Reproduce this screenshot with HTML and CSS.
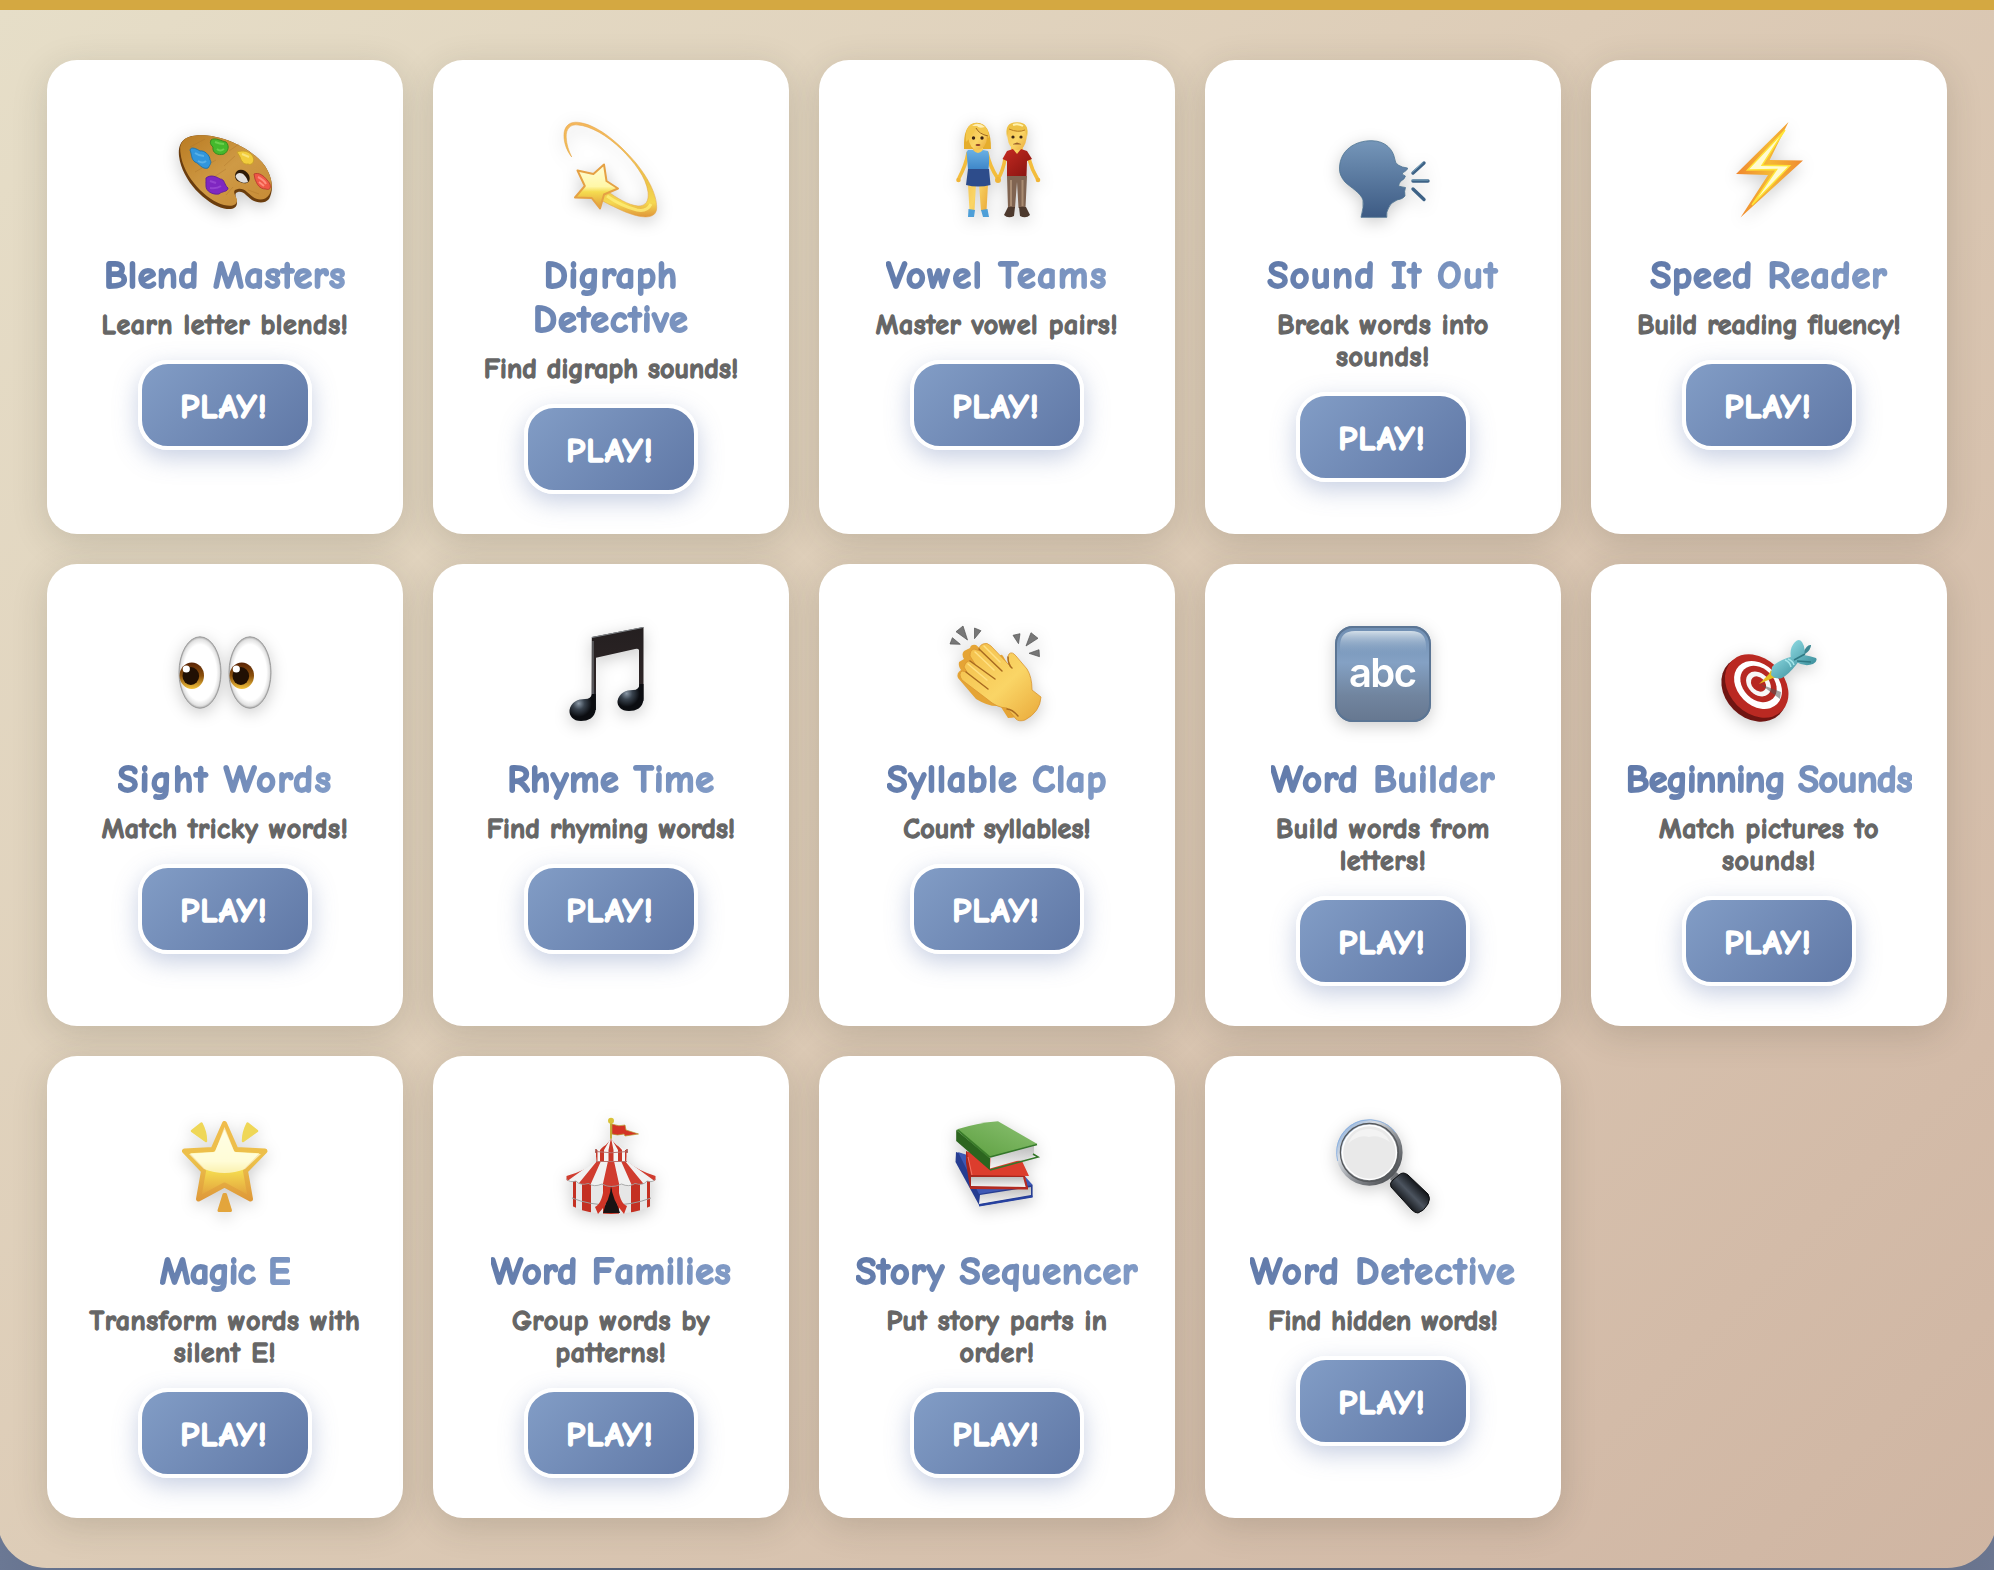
FILE: index.html
```html
<!DOCTYPE html>
<html lang="en">
<head>
<meta charset="utf-8">
<title>Reading Games</title>
<link rel="stylesheet" href="styles.css">
</head>
<body>
<svg class="defs" width="0" height="0" aria-hidden="true">
  <defs>
    <linearGradient id="wood" x1="0" y1="0" x2="1" y2="1"><stop offset="0" stop-color="#b97b22"/><stop offset=".5" stop-color="#cf9a45"/><stop offset="1" stop-color="#c68a35"/></linearGradient>
    <linearGradient id="gold" x1="0" y1="0" x2="0" y2="1"><stop offset="0" stop-color="#f5b75c"/><stop offset=".65" stop-color="#ecc648"/><stop offset=".85" stop-color="#f5d850"/><stop offset="1" stop-color="#e0963a"/></linearGradient>
    <linearGradient id="star" x1="0" y1="0" x2="0" y2="1"><stop offset="0" stop-color="#fffdd8"/><stop offset=".5" stop-color="#fff7a8"/><stop offset=".62" stop-color="#f5dc50"/><stop offset="1" stop-color="#e09a3a"/></linearGradient>
    <linearGradient id="starEdge" x1="0" y1="0" x2="0" y2="1"><stop offset="0" stop-color="#f0bc4c"/><stop offset=".5" stop-color="#ecc04a"/><stop offset="1" stop-color="#df9a3a"/></linearGradient>
    <linearGradient id="head" x1="0" y1="0" x2="0" y2="1"><stop offset="0" stop-color="#7596b9"/><stop offset="1" stop-color="#3d5b84"/></linearGradient>
    <linearGradient id="bolt" x1="0" y1="0" x2="1" y2="0"><stop offset="0" stop-color="#f0862e"/><stop offset=".5" stop-color="#f5b736"/><stop offset="1" stop-color="#ef8a30"/></linearGradient>
    <linearGradient id="skin" x1="0" y1="0" x2="1" y2="1"><stop offset="0" stop-color="#f3bd48"/><stop offset=".55" stop-color="#fad566"/><stop offset="1" stop-color="#e9a93a"/></linearGradient>
    <linearGradient id="iris" x1="0" y1="0" x2="0" y2="1"><stop offset="0" stop-color="#5a2506"/><stop offset=".5" stop-color="#8a4f0c"/><stop offset="1" stop-color="#f2c23c"/></linearGradient>
    <radialGradient id="eyeball"><stop offset=".78" stop-color="#fff"/><stop offset=".93" stop-color="#e2e2e2"/><stop offset="1" stop-color="#a9a9a9"/></radialGradient>
    <radialGradient id="note" cx=".35" cy=".35"><stop offset="0" stop-color="#8a98a6"/><stop offset=".45" stop-color="#39434e"/><stop offset="1" stop-color="#0b0d11"/></radialGradient>
    <linearGradient id="beam" x1="0" y1="0" x2="0" y2="1"><stop offset="0" stop-color="#241f20"/><stop offset=".7" stop-color="#2d2526"/><stop offset="1" stop-color="#202c3b"/></linearGradient>
    <linearGradient id="tile" x1="0" y1="0" x2="0" y2="1"><stop offset="0" stop-color="#6f8eb2"/><stop offset=".38" stop-color="#84a1c4"/><stop offset=".72" stop-color="#71859f"/><stop offset="1" stop-color="#667790"/></linearGradient>
    <linearGradient id="gloss" x1="0" y1="0" x2="0" y2="1"><stop offset="0" stop-color="#d3dfe9"/><stop offset="1" stop-color="#84a1c4" stop-opacity="0"/></linearGradient>
    <linearGradient id="tee" x1="0" y1="0" x2="0" y2="1"><stop offset="0" stop-color="#6ab0e4"/><stop offset="1" stop-color="#3f87c9"/></linearGradient>
    <linearGradient id="polo" x1="0" y1="0" x2="1" y2="1"><stop offset="0" stop-color="#c52a22"/><stop offset="1" stop-color="#85130f"/></linearGradient>
    <linearGradient id="green" x1="0" y1="1" x2="1" y2="0"><stop offset="0" stop-color="#5b9e3e"/><stop offset="1" stop-color="#8bc172"/></linearGradient>
    <linearGradient id="ring" x1="0" y1="0" x2="1" y2="1"><stop offset="0" stop-color="#7fa8dc"/><stop offset=".3" stop-color="#d8dde3"/><stop offset=".6" stop-color="#8a8d92"/><stop offset="1" stop-color="#3c3f43"/></linearGradient>
    <linearGradient id="grip" x1="0" y1="1" x2="1" y2="0"><stop offset=".25" stop-color="#08090b"/><stop offset=".5" stop-color="#4c545f"/><stop offset=".72" stop-color="#101317"/></linearGradient>
    <linearGradient id="dart" x1="0" y1="0" x2="1" y2="1"><stop offset="0" stop-color="#8fdbe3"/><stop offset="1" stop-color="#3a8d9a"/></linearGradient>
    <linearGradient id="pages" x1="0" y1="0" x2="0" y2="1"><stop offset="0" stop-color="#bdbdbd"/><stop offset="1" stop-color="#f4f4f4"/></linearGradient>
    <clipPath id="roof"><path d="M33 43.500H64Q76 53 92.500 58V62Q90 65 84 63Q80 68 72 65.500Q66 69.500 58.500 66Q48 71 39 66Q31 69.500 25.500 65.500Q17 68 13 63Q6 65 3.500 62V58Q22 53 33 43.500Z"/></clipPath>
    <clipPath id="wall"><path d="M9 61H88V88Q72 96 48 96Q24 96 9 88Z"/></clipPath>
    <clipPath id="cone"><path d="M48 20Q50 27 64.500 32.500L63.500 43.700H33.500L32.500 32.500Q46 27 48 20Z"/></clipPath>
  </defs>
</svg>

<main class="games">
  <article class="card">
    <svg class="icon" viewBox="0 0 96 96">
      <path fill="#6b3d0d" d="M2 34C0 15 14 12 30 13.500C54 16 78 30 88 44C97 58 96 70 92 77C88 82 80 81 75 78C69 74 67 69 61 70C56 71 60 77 60 80.500C60 87 54 88 47 86.500C29 82 5 59 2 34Z"/>
      <path fill="url(#wood)" d="M3.500 31C1 15 15 12 30 13.500C54 16 78 30 88 44C96 57 96 66 92 73C88 79 80 78 76 75C70 71 68 66 61 67C53 68 60 75 60 78C60 84 54 84.500 47 83C30 79 6 55 3.500 31Z"/>
      <path stroke="#a97128" stroke-width=".6" opacity=".6" d="M13 25L28 17M18 50L39 38M28 61L49 47M52 29L62 22M49 73L56 65M47 44L58 34M71 68L82 72"/>
      <path fill="#2f1b07" d="M58 53C59 46 68 46 72 53C75 61 68 63 63 60C59 59 58 56 58 53Z"/><path d="M58.500 54C61 48 69 51 71 60C67 62 60 60 58.500 54Z" fill="#e2e0de"/>
      <path fill="#3196dc" stroke="#2774a2" d="M13 28C14 24 20 27 23 29C27 28 33 33 33 38C35 40 33 43 31 46C25 48 22 41 18 40C14 37 15 33 13 28Z"/><path fill="none" stroke="#58b0e6" stroke-width="2" d="M18 31Q22 34 27 34M21 39Q26 42 29 39"/>
      <path fill="#45b82c" stroke="#398a20" d="M34 18C38 15 44 19 49 20C53 24 51 30 47 32C41 34 35 31 36 25C33 22 33 21 34 18Z"/><path fill="none" stroke="#6bd04c" stroke-width="2" d="M38 20Q43 22 47 22M40 27Q43 30 47 27"/>
      <path fill="#f2cd3c" stroke="#caa02b" d="M60 30C66 28 71 29 75 33C79 39 75 44 71 42C66 43 64 38 63 35Z"/><path stroke="#fae37a" fill="none" stroke-width="2" d="M65 32L72 35"/>
      <path fill="#ef5746" stroke="#bd4031" d="M77 52C82 50 87 54 90 58C96 64 93 69 89 67C82 67 80 62 78 57Z"/><path stroke="#ff8d7c" fill="none" stroke-width="2" d="M81 55Q87 58 89 62M82 60L87 64"/>
      <path fill="#7f27c1" stroke="#64219a" d="M29 56C34 52 40 55 43 57C48 57 47 63 51 66C51 70 45 69 42 72C35 73 29 69 29 64Z"/><path stroke="#9542d0" fill="none" stroke-width="2" d="M33 59L39 61M33 66Q40 67 44 64"/>
    </svg>
    <h3 class="title snug">Blend Masters</h3>
    <p class="text">Learn letter blends!</p>
    <button class="play">PLAY!</button>
  </article>

  <article class="card">
    <svg class="icon" viewBox="0 0 96 96">
      <path fill="url(#gold)" stroke="#e2a044" stroke-width=".5" d="M8.700 35C3 28 0 18 1.200 10C3 1 10-1 18 .8C36 4 57 22 73 41C86 57 95 75 93.500 88C91 99 74 95 60 89C51 85 43 81 38 78L44 69C54 76 65 83 75 84C83 84 86 79 85 70C83 55 71 40 59 28C44 13 27 4 15 3C7 2 3 7 3.200 15C3.500 23 6 29 8.700 35Z"/>
      <path fill="none" stroke="#fff17b" stroke-width="3" opacity=".75" d="M44 74Q58 84 74 88Q84 90 88 82"/>
      <path fill="url(#star)" stroke="#e5a144" stroke-width="2" stroke-linejoin="round" d="M41 42.500L43.500 59L55 66.500L41 72.500L37 86.500L28.700 76L12 75.500L21.800 64L14.500 48.500L30.400 52Z"/>
    </svg>
    <h3 class="title">Digraph Detective</h3>
    <p class="text snug">Find digraph sounds!</p>
    <button class="play">PLAY!</button>
  </article>

  <article class="card">
    <svg class="icon" viewBox="0 0 96 96">
      <path fill="#e5ad2c" d="M15 27Q14 2 27 .8Q42 0 42 27Z"/>
      <path fill="none" stroke="#f3bd3c" stroke-width="3.600" stroke-linecap="round" d="M19 31Q17 43 10 56M38 31Q41 45 48.500 56M56 37Q54 49 49 57M80 37Q83 48 88.500 57"/>
      <circle cx="9.500" cy="58" r="2.300" fill="#f0b537"/><circle cx="49" cy="58" r="3" fill="#f0b537"/><circle cx="89" cy="58" r="2.300" fill="#f0b537"/>
      <path fill="url(#skin)" d="M24 23H34V31H24ZM19 62H27L25.500 89H20.500ZM30 62H39L37.500 89H32Z"/>
      <path fill="url(#tee)" d="M19 28L24 28Q29 34 34 28L39 29Q41 34 39.500 47H19Q18 35 17.500 30Z"/>
      <path fill="#2d4c8b" d="M19 47H40L41.500 63Q29 66 17 63Z"/>
      <ellipse cx="28.700" cy="16" rx="9.200" ry="11.500" fill="url(#skin)"/>
      <path fill="#f3c74b" d="M17 20Q15 2 27 1Q40 2 40 16Q32 11 27 6Q24 14 17 20Z"/>
      <path fill="none" stroke="#9e671e" stroke-width="1" d="M27 6Q30 12 39 14"/>
      <path fill="#fff8d0" d="M23 4Q29-1 36 5Q30 7 28 4Z" opacity=".8"/>
      <g fill="#3b2415"><circle cx="24.500" cy="16" r="1.700"/><circle cx="33" cy="16" r="1.700"/><ellipse cx="29" cy="23" rx="2.500" ry="1.100" fill="#8b3c25"/></g>
      <path fill="#4e9fd8" d="M19.500 87L26 88L25 95H19ZM32 88L38.500 87L40 95H34Z"/>
      <path fill="url(#skin)" d="M62 22H74V32H62Z"/>
      <path fill="url(#polo)" d="M58 29L64 27L68 32L72 27L78 29L83 37L78 39L77.500 54H58V39L53.500 37Z"/>
      <path fill="#806451" d="M58 54H78L76.500 86H69.500L68 60L66 86H59Z"/><path stroke="#a98b71" stroke-width="2" d="M62 58V84M73.500 58V84"/>
      <path fill="#4d392d" d="M59 85H66L65 94Q59 97 55 93ZM70 85H77L81 93Q77 97 71 94Z"/>
      <path fill="url(#skin)" d="M58 9Q59 1 68 1Q78 1 78 9Q78 24 72 27Q68 29 64 27Q58 23 58 9Z"/>
      <path fill="#edc145" d="M58 15Q55 0 68 .3Q81 0 78 15L76 8Q68 11 60 7Z"/><path stroke="#b87d24" fill="none" d="M60 7Q69 11 76 8"/><path stroke="#fff2ae" stroke-width="2" d="M64 3Q69 1 74 4" fill="none"/>
      <g fill="#3b2415"><circle cx="64" cy="15" r="1.600"/><circle cx="72" cy="15" r="1.600"/><path d="M64 22L68 20.500L72 22V22.500H64Z" fill="#99602c"/></g>
    </svg>
    <h3 class="title airy">Vowel Teams</h3>
    <p class="text">Master vowel pairs!</p>
    <button class="play">PLAY!</button>
  </article>

  <article class="card">
    <svg class="icon" viewBox="0 0 96 96">
      <path fill="url(#head)" stroke="#4d7291" stroke-width=".8" d="M4.500 46C5 28 20 18.500 37 18.700C51 19 58 28 59.500 36Q60 41 63 43Q67 45.500 72.500 46Q73 48 67.300 51Q67 53 70.400 54Q70 57 66 59Q64 61 63.500 64Q67 65 70.500 65.500Q69 69 70 74Q68 77 62 78Q55 81 53.500 86Q51 90 51.800 95.300H26Q29 85 28 78C26 71 15 65 10 60Q4 53 4.500 46Z"/>
      <path stroke="#3d6286" stroke-width="3.400" stroke-linecap="round" d="M78 51L89 41M78 59H93M78 67L89 77.500"/>
      <path stroke="#7fa9c1" stroke-linecap="round" d="M77.500 50L88 40.500M77 58H93"/>
    </svg>
    <h3 class="title airy">Sound It Out</h3>
    <p class="text">Break words into sounds!</p>
    <button class="play">PLAY!</button>
  </article>

  <article class="card">
    <svg class="icon" viewBox="0 0 96 96">
      <path fill="url(#bolt)" d="M67.500 0L48.700 38L82 38.500L19.500 95.500L47 53L15 52Z"/>
      <path fill="#fffbd0" stroke="#ffe536" stroke-width="1.400" d="M64 8L41 43.300L68.700 43.700L31 83L55.600 47.500L26.500 48Z"/>
    </svg>
    <h3 class="title">Speed Reader</h3>
    <p class="text snug">Build reading fluency!</p>
    <button class="play">PLAY!</button>
  </article>

  <article class="card">
    <svg class="icon" viewBox="0 0 96 96">
      <g id="eye"><ellipse cx="23" cy="46.500" rx="21" ry="35.700" fill="url(#eyeball)" stroke="#9c9c9c" stroke-width="1"/>
      <ellipse cx="14.800" cy="49.700" rx="12.200" ry="13.200" fill="url(#iris)"/><ellipse cx="13.800" cy="50" rx="8.300" ry="9" fill="#211003"/><circle cx="9.300" cy="43" r="3.600" fill="#fff"/></g>
      <use href="#eye" x="50"/>
    </svg>
    <h3 class="title airy">Sight Words</h3>
    <p class="text">Match tricky words!</p>
    <button class="play">PLAY!</button>
  </article>

  <article class="card">
    <svg class="icon" viewBox="0 0 96 96">
      <path fill="url(#beam)" d="M28.800 11L80.500 1V75H76V24Q75 22 72 23L33 31.700V84H28.500Z"/>
      <path stroke="#82878b" stroke-width="1" fill="none" d="M29 11.500L80 1.500M30 15V80"/>
      <path fill="url(#note)" d="M32.800 68V83C32 92 25 95 18 95C10 95 6 90 6.500 84C8 76 15 73 22 73Q28 73 29 68Z"/>
      <path fill="url(#note)" d="M80.500 58V73C80 82 73 85 66 85C58 85 54 80 54.500 75C56 67 63 64 70 64Q76 64 76.500 58Z"/>
    </svg>
    <h3 class="title snug">Rhyme Time</h3>
    <p class="text snug">Find rhyming words!</p>
    <button class="play">PLAY!</button>
  </article>

  <article class="card">
    <svg class="icon" viewBox="0 0 96 96">
      <path fill="#777" stroke="#555" stroke-width=".7" d="M14 0L7 5.700L18.500 14ZM25.500 2L32 4.700L25.500 12.700ZM3.400 11.700L1 18L11.300 18.300ZM64 9.300L71 7.700L69.500 17.700ZM82 6.700L89 12.300L77 20ZM90 23.700L90.500 30.700L80 27.300Z"/>
      <path fill="#e5a435" d="M50 78L59 92Q63 92 67 91L77 70L54 30Q52 27 50 31L56 44L27 19Q22 18 21 22L15 25Q12 28 15 33L10 36Q9 40 12 44Q7 47 9 52L27 73Q40 81 50 80Z"/>
      <path fill="url(#skin)" stroke="#d99631" stroke-width=".8" d="M34 18Q38 16 42 20L62 41Q57 32 60 28Q63 25 67 30L78 43Q83 51 83 64L92 71Q91 86 76 94Q70 96 67 93L58 82Q48 82 38 73L13 54Q9 48 13 45L18 46L15 41Q17 34 22 35L26 38L21 30Q21 24 25 23L31 25Q29 20 34 18Z"/>
      <path stroke="#a86a20" stroke-width="1.500" fill="none" stroke-linecap="round" d="M30 23L53 45M21 35L46 53M17 46L39 63M58 83Q63 83 69 90M59 31Q59 39 63 42"/>
      <path stroke="#ffe083" stroke-width="1.500" fill="none" stroke-linecap="round" d="M35 20L51 36M26 26L45 44M19 38L38 54"/>
    </svg>
    <h3 class="title">Syllable Clap</h3>
    <p class="text snug">Count syllables!</p>
    <button class="play">PLAY!</button>
  </article>

  <article class="card">
    <svg class="icon" viewBox="0 0 96 96">
      <rect width="96" height="96" rx="18" fill="url(#tile)"/><rect x="1" y="1" width="94" height="94" rx="17" fill="none" stroke="#5b7594" stroke-width="2"/>
      <path fill="url(#gloss)" d="M5 24V20Q5 5 20 5H76Q91 5 91 20V24Q91 28 84 29H12Q5 28 5 24Z"/>
      <text class="abc" x="48" y="60.500" text-anchor="middle" textLength="68">abc</text>
    </svg>
    <h3 class="title">Word Builder</h3>
    <p class="text">Build words from letters!</p>
    <button class="play">PLAY!</button>
  </article>

  <article class="card">
    <svg class="icon" viewBox="0 0 96 96">
      <g transform="translate(33 63) rotate(45)"><ellipse rx="36" ry="29" fill="#701512"/></g>
      <g transform="translate(35.700 60) rotate(45)"><ellipse rx="35.500" ry="27.500" fill="#ba2922"/></g>
      <g transform="translate(37 59) rotate(45)"><ellipse rx="27" ry="20.500" fill="#fff"/></g>
      <g transform="translate(37.500 58) rotate(45)"><ellipse rx="20.500" ry="15.500" fill="#b62822"/><ellipse rx="14" ry="10.500" fill="#f7f7f7"/><ellipse rx="8.600" ry="6.500" fill="#b62822"/></g>
      <path fill="#555" opacity=".55" d="M39 58L60 66L59 73Z"/>
      <path fill="#e5bd20" d="M38 58L48 48L50 44L57 52L52 52Z"/>
      <path fill="url(#dart)" d="M51 41Q55 36 66 32L73 30L78 35L75 39Q68 48 61 52Q55 54 50 49Z"/>
      <path fill="#3b8792" d="M82 27Q86 18 90 19Q90 24 84 28Z"/>
      <path fill="url(#dart)" d="M70 32Q68 22 74 16Q78 12 81 16Q85 22 83 29Q89 30 95 32Q97 35 92 38Q84 41 75 36Z"/>
      <path stroke="#2f7984" stroke-width="1.500" d="M73 34L84 28M76 35L90 36" fill="none"/><path stroke="#a5e6ea" stroke-width="1.500" d="M64 34Q69 36 70 41M67 33Q72 35 73 39" fill="none"/>
    </svg>
    <h3 class="title tight">Beginning Sounds</h3>
    <p class="text">Match pictures to sounds!</p>
    <button class="play">PLAY!</button>
  </article>

  <article class="card">
    <svg class="icon" viewBox="0 0 96 96">
      <path fill="#efd757" stroke="#efd757" stroke-width="2.500" stroke-linejoin="round" d="M24.500 5.500L15 13L29 23Q29 14 24.500 5.500ZM70.500 5.500L80 13L66 23Q66 14 70.500 5.500Z"/>
      <path fill="#e3a53c" stroke="#e3a53c" stroke-width="3" stroke-linejoin="round" d="M47 76.500H48.500L53.500 92.500H42Z"/>
      <path fill="url(#star)" stroke="url(#starEdge)" stroke-width="5" stroke-linejoin="round" d="M47.500 5.500L59 31.500L88 33L68.500 53L73.500 81L47.500 67L21.500 81L26.500 53L7.500 33L36 31.500Z"/>
      <path fill="#fffff0" opacity=".65" d="M47.500 9L57.500 34L84 36L68 51Q58 55 47.500 55Q37 55 27 51L12 36L38 34Z"/>
    </svg>
    <h3 class="title tight">Magic E</h3>
    <p class="text">Transform words with silent E!</p>
    <button class="play">PLAY!</button>
  </article>

  <article class="card">
    <svg class="icon" viewBox="0 0 96 96">
      <path stroke="#c3ad37" stroke-width="2" d="M48 4V22"/><circle cx="48" cy="2.800" r="3" fill="#d8c239"/>
      <path fill="#d43325" stroke="#b99a30" stroke-width=".7" d="M49 6Q56 9 62 7L63 12L75.500 16L62 18L61 16Q54 18 49 16Z"/>
      <g clip-path="url(#wall)"><rect x="8" y="60" width="81" height="36" fill="#e6e6e6"/><path fill="#c43022" d="M10 60H13V96H10ZM19 60H28V96H19ZM68 60H77V96H68ZM84 60H87V96H84ZM40 60H56V96H40Z"/><path d="M9 80Q26 87 48 87Q70 87 88 80" stroke="#9d9d9d" fill="none"/></g>
      <path fill="#191313" d="M48 68L57 95H40Z"/><path fill="#cf3426" d="M48 66Q48 83 35 96L32 89Q40 85 41 66ZM48 66Q49 83 61 96L64 88Q56 85 55 66Z"/>
      <g clip-path="url(#roof)"><rect y="43" width="96" height="27" fill="#f1f1f1"/><path fill="#d03c2f" d="M45 43H51L57 70H39ZM38 43L26 70H12L34 43ZM58 43L70 70H84L62 43ZM32 43L3 64V57ZM64 43L93 64V57Z"/></g>
      <path stroke="#999" stroke-width=".8" fill="none" d="M3.500 61Q7 65 13 63Q17 68 25.500 65.500Q31 69.500 39 66Q48 71 58.500 66Q66 69.500 72 65.500Q80 68 84 63Q90 65 92.500 61"/>
      <g clip-path="url(#cone)"><rect x="30" y="20" width="36" height="24" fill="#f4f4f4"/><path fill="#c93729" d="M48 20L50.500 32V44H45.500V32ZM48 20L41 32V44H37V32ZM48 20L59 32V44H55V32ZM33 32H34.500V44H33ZM62 32H63.500V44H62Z"/></g>
      <path stroke="#b9736d" stroke-width="1" fill="none" d="M32.500 33.500Q48 36 64.500 33.500M33 43.500H64"/><path stroke="#a44740" stroke-width="1.500" d="M33 31V35M64 31V35"/>
    </svg>
    <h3 class="title snug">Word Families</h3>
    <p class="text">Group words by patterns!</p>
    <button class="play">PLAY!</button>
  </article>

  <article class="card">
    <svg class="icon" viewBox="0 0 96 96">
      <path fill="#263d91" d="M7 34L6.500 44L30.600 88L83.600 79V67L72 56Z"/><path fill="#3d58b5" d="M9 34L30 76L83.600 67L73 55Z"/><path fill="url(#pages)" d="M31 77L82 69V77L30 86Z"/><path stroke="#2641a0" stroke-width="2" d="M30 87.500L83.500 78.500"/>
      <path fill="#a7261d" d="M17 33V45L21 70L79 71L76 58Z"/><path fill="#dc3d2d" d="M18 34L22 57L80 58L73 43L40 40Z"/><path fill="url(#pages)" d="M22 59H76L77 69L22 68Z"/><path stroke="#b52b22" stroke-width="2" d="M21 70L79 70.500M75 59L78 70"/><path stroke="#f57365" d="M19 39L23 57" fill="none"/>
      <path fill="#2c651f" d="M7.200 12V23L40.900 52.300L41 40Z"/><path fill="#3a7c29" d="M7.200 12L10 11L43 38L40 40Z"/><path fill="url(#green)" d="M9 11Q29 5 49 3.300L88.400 26L42 39Z"/><path fill="url(#pages)" d="M41.500 40L85 28V38L41 50.500Z"/><path stroke="#34772a" stroke-width="1.600" fill="none" d="M41 52L89 39L84 36M41 39L88 26.500"/>
    </svg>
    <h3 class="title">Story Sequencer</h3>
    <p class="text">Put story parts in order!</p>
    <button class="play">PLAY!</button>
  </article>

  <article class="card">
    <svg class="icon" viewBox="0 0 96 96">
      <path fill="#707276" d="M55 61L61 54L68 60L60 67Z"/>
      <circle cx="34.400" cy="34.500" r="30.200" fill="#e9e9e9" stroke="url(#ring)" stroke-width="6"/>
      <circle cx="34.400" cy="34.500" r="32.800" fill="none" stroke="#88afe0" stroke-width=".8" stroke-dasharray="90 200" transform="rotate(165 34.400 34.500)"/>
      <circle cx="34.400" cy="34.500" r="29" fill="none" stroke="#55585b" stroke-width="1.300"/><circle cx="34.400" cy="34.500" r="27" fill="none" stroke="#fff" stroke-width="1.500"/>
      <path fill="#f3f3f3" d="M13 26Q19 10 36 11Q49 12 55 24Q43 16 34 19Q23 16 13 26Z"/>
      <path fill="url(#grip)" stroke="#090b0d" d="M64 57Q68 53 73 57L93 76Q96 80 93 86Q89 93 83 95Q80 95 77 92L56 69Q54 65 58 62Z"/>
    </svg>
    <h3 class="title airy">Word Detective</h3>
    <p class="text snug">Find hidden words!</p>
    <button class="play">PLAY!</button>
  </article>
</main>
</body>
</html>
```
FILE: styles.css
```css
* { box-sizing: border-box; }

body {
  margin: 0;
  min-height: 1570px;
  overflow-x: hidden;
  background: linear-gradient(90deg, #6b7894, #536078 12%, #515a70 80%, #6b7690);
  font-family: "Comic Sans MS", "Comic Neue", "Open Sans", sans-serif;
  font-weight: 700;
}

.defs { display: block; width: 0; height: 0; }

.games {
  display: grid;
  grid-template-columns: repeat(5, 356px);
  grid-template-rows: 474px 462px 462px;
  gap: 30px;
  margin: 0 -3px;
  padding: 50px;
  border-top: 10px solid #d4a841;
  border-radius: 0 0 50px 50px;
  background: linear-gradient(135deg, #e6dec8 0%, #ddccb7 45%, #d3bba8 85%, #cfb5a2 100%);
}

.card {
  display: flex;
  flex-direction: column;
  align-items: center;
  padding: 62px 30px 0;
  border-radius: 30px;
  background: #fff;
  box-shadow: 0 8px 35px rgba(50, 45, 35, .17);
  text-align: center;
}

.icon {
  flex: none;
  width: 96px;
  height: 96px;
  overflow: visible;
  filter: drop-shadow(0 4px 8px rgba(0, 0, 0, .2));
}

.title {
  margin: 34px 0 11px;
  padding-top: 2px;
  font-size: 38px;
  line-height: 44px;
  letter-spacing: 1px;
  background: linear-gradient(135deg, #5f78a8, #839dc8) 0 0 / 100% calc(100% - 2px) no-repeat;
  -webkit-background-clip: text;
  background-clip: text;
  -webkit-text-stroke: 1.9px transparent;
  color: transparent;
}

.title.tight { letter-spacing: -.5px; }
.title.snug { letter-spacing: .7px; }
.title.airy { letter-spacing: 1.6px; }

.text {
  margin: 0 0 19px;
  font-size: 28px;
  line-height: 32px;
  letter-spacing: .55px;
  -webkit-text-stroke: 1.3px #666;
  color: #666;
}

.text.snug { letter-spacing: .05px; }

.play {
  width: 174px;
  height: 90px;
  padding: 3px 2px 0 0;
  border: 4px solid #fff;
  border-radius: 30px;
  background: linear-gradient(135deg, #829dc6, #6078a6);
  box-shadow: 0 8px 25px rgba(96, 120, 175, .35);
  color: #fff;
  font: inherit;
  font-size: 34px;
  letter-spacing: 1.2px;
  -webkit-text-stroke: 1.5px #fff;
}

.abc {
  fill: #fff;
  font-family: Inter, sans-serif;
  font-size: 40px;
  font-weight: 600;
}
```
